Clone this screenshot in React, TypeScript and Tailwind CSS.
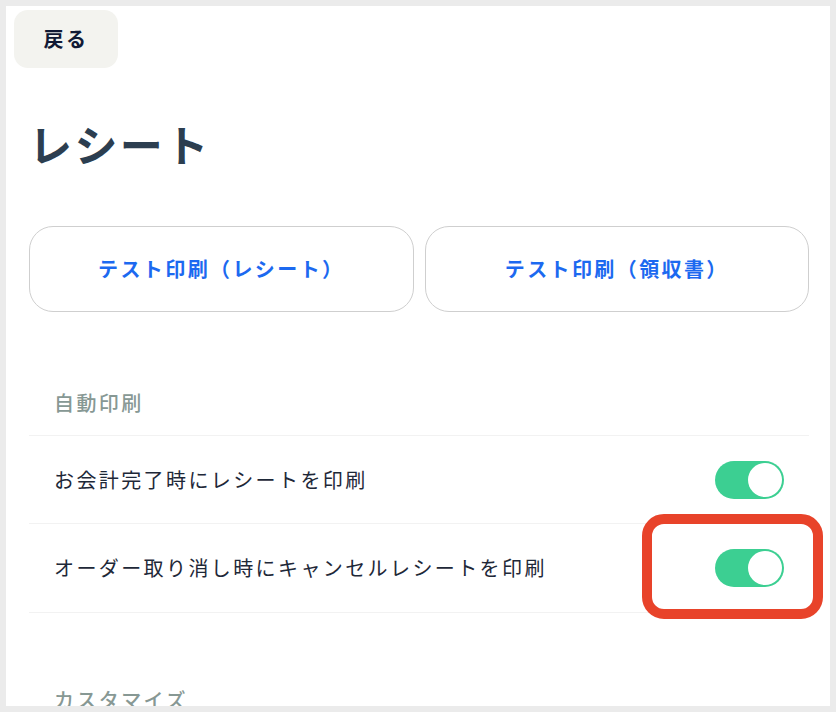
import React from 'react';

const font = { fontFamily: '"Noto Sans CJK JP", "Noto Sans", sans-serif' };

function Toggle() {
  return (
    <div className="w-[69px] h-[38px] rounded-full bg-[#3ccf92] flex items-center justify-end p-[2px]">
      <div className="w-[34px] h-[34px] rounded-full bg-white" />
    </div>
  );
}

export default function App() {
  const rows = [
    { label: 'お会計完了時にレシートを印刷', h: 'h-[88px]' },
    { label: 'オーダー取り消し時にキャンセルレシートを印刷', h: 'h-[89px]' },
  ];

  return (
    <div
      className="relative w-[836px] h-[712px] overflow-hidden bg-white border-[6px] border-[#ebebeb] tracking-[0.15em]"
      style={font}
    >
      {/* Back */}
      <div className="pl-[8px] pt-[4px]">
        <button className="w-[104px] h-[58px] rounded-[14px] bg-[#f3f3ef] text-[20px] font-bold leading-none tracking-[0.12em] text-[#111a35] flex items-center justify-center">
          戻る
        </button>
      </div>

      <div className="pl-[23px] pr-[21px]">
        <h1 className="mt-[54px] text-[43px] font-bold leading-none text-[#2c3e50]">レシート</h1>

        {/* Test print buttons */}
        <div className="mt-[61px] grid grid-cols-2 gap-[11px]">
          <button className="h-[86px] rounded-[24px] border border-[#cfcfcf] bg-white text-[20px] font-bold leading-none text-[#1c69f0]">
            テスト印刷（レシート）
          </button>
          <button className="h-[86px] rounded-[24px] border border-[#cfcfcf] bg-white text-[20px] font-bold leading-none text-[#1c69f0]">
            テスト印刷（領収書）
          </button>
        </div>

        {/* Auto print */}
        <div className="mt-[81px] pl-[25px] pb-[22px] border-b border-[#f2f2f2] text-[20px] font-medium leading-none text-[#879894]">
          自動印刷
        </div>
        {rows.map((row) => (
          <div
            key={row.label}
            className={`${row.h} flex items-center justify-between pl-[25px] pr-[25px] border-b border-[#f2f2f2]`}
          >
            <span className="text-[20px] leading-none text-[#1e2838]">{row.label}</span>
            <Toggle />
          </div>
        ))}

        <div className="mt-[77px] pl-[25px] text-[20px] font-medium leading-none text-[#879894]">カスタマイズ</div>
      </div>

      {/* highlight */}
      <div className="absolute left-[636px] top-[508px] w-[181px] h-[105px] rounded-[22px] border-[10px] border-[#e8432a]" />
    </div>
  );
}
